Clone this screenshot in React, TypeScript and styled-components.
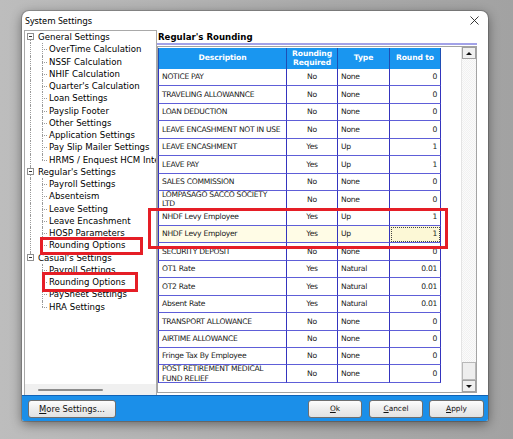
import styled, { createGlobalStyle } from "styled-components";

const GlobalStyle = createGlobalStyle`
  html, body {
    margin: 0;
    padding: 0;
  }
  body {
    font-family: "DejaVu Sans", Verdana, sans-serif;
  }
`;

const UI = `"DejaVu Sans", Verdana, sans-serif`;

const Page = styled.div`
  position: relative;
  width: 513px;
  height: 439px;
  box-sizing: border-box;
  padding: 11px 0 0 22px;
  background: linear-gradient(90deg, #bdbdbd 0%, #ababab 60%, #a2a2a2 100%);
  overflow: hidden;
`;

const Window = styled.div`
  width: 466px;
  height: 410px;
  display: flex;
  flex-direction: column;
  background: #ffffff;
  border-radius: 7px 7px 2px 2px;
  overflow: hidden;
  box-shadow: 0 0 0 1px rgba(0, 0, 0, 0.18), 0 3px 12px rgba(0, 0, 0, 0.45);
`;

const TitleBar = styled.div`
  height: 19px;
  flex: none;
  display: flex;
  align-items: center;
  justify-content: space-between;
  padding: 0 9px 0 3px;
  font-family: "Noto Sans", "Open Sans", sans-serif;
  font-size: 9px;
  color: #000;
`;

const Body = styled.div`
  flex: 1;
  min-height: 0;
  display: flex;
  padding-left: 2px;
`;

const TreePanel = styled.div`
  width: 133px;
  flex: none;
  box-sizing: border-box;
  border: 1px solid #a9a9a9;
  border-bottom: none;
  display: flex;
  flex-direction: column;
  background: #fff;
`;

const TreeScroll = styled.div`
  flex: 1;
  overflow: hidden;
`;

const TreeRow = styled.div<{ $root?: boolean; $first?: boolean; $last?: boolean; $lastChild?: boolean }>`
  position: relative;
  height: 12.25px;
  line-height: 12.25px;
  white-space: nowrap;
  font-family: ${UI};
  font-size: 8.6px;
  color: #000;
  padding-left: ${(p) => (p.$root ? 13 : 24)}px;

  &::before {
    content: "";
    position: absolute;
    left: ${(p) => (p.$root ? 5 : 17)}px;
    top: ${(p) => (p.$root && p.$first ? "50%" : "0")};
    height: ${(p) =>
      p.$root
        ? p.$first || p.$last
          ? "50%"
          : "100%"
        : p.$lastChild
        ? "50%"
        : "100%"};
    border-left: 1px dotted #9a9a9a;
  }

  &::after {
    content: "";
    position: absolute;
    display: ${(p) => (p.$root ? "none" : "block")};
    left: 17px;
    top: 50%;
    width: 5px;
    border-top: 1px dotted #9a9a9a;
  }
`;

const Trunk = styled.span`
  position: absolute;
  left: 5px;
  top: 0;
  height: 100%;
  border-left: 1px dotted #9a9a9a;
`;

const Expander = styled.span`
  position: absolute;
  left: 2px;
  top: 50%;
  margin-top: -4px;
  width: 7px;
  height: 7px;
  box-sizing: border-box;
  border: 1px solid #8f8f8f;
  background: #fff;
  z-index: 1;

  &::after {
    content: "";
    position: absolute;
    left: 1px;
    top: 2px;
    width: 3px;
    height: 1px;
    background: #333;
  }
`;

const HScroll = styled.div`
  height: 11px;
  flex: none;
  background: #f0f0f0;
  display: flex;
  align-items: center;
  padding-left: 13px;
`;

const HThumb = styled.div`
  width: 65px;
  height: 2px;
  border-radius: 1px;
  background: #8c8c8c;
`;

const RightPanel = styled.div`
  flex: 1;
  min-width: 0;
  display: flex;
  flex-direction: column;
  padding: 0 11px 2px 0;
`;

const PanelTitle = styled.div`
  height: 13px;
  flex: none;
  display: flex;
  align-items: center;
  padding-left: 1px;
  font-family: ${UI};
  font-weight: bold;
  font-size: 8.6px;
  color: #000;
  border-bottom: 2px solid #a2a2e8;
  margin-bottom: 1px;
`;

const GridFrame = styled.div`
  flex: 1;
  min-height: 0;
  display: flex;
  border: 1px solid #a3a3a3;
  background: #fff;
  overflow: hidden;
`;

const TableArea = styled.div`
  flex: 1;
  overflow: hidden;
  padding-top: 1px;
`;

const Table = styled.div`
  display: grid;
  grid-template-columns: 129px 51px 52px 51px;
  grid-template-rows: 21px;
  grid-auto-rows: 17.45px;
  width: max-content;
`;

const HeadCell = styled.div<{ $first?: boolean }>`
  background: #1996f0;
  color: #fff;
  font-family: ${UI};
  font-weight: bold;
  font-size: 7.6px;
  line-height: 8.5px;
  letter-spacing: -0.1px;
  display: flex;
  align-items: center;
  justify-content: center;
  text-align: center;
  box-sizing: border-box;
  border-right: 1px solid #1e4fb4;
  border-left: ${(p) => (p.$first ? "1px solid #1e4fb4" : "none")};
`;

const Cell = styled.div<{ $align: "left" | "center" | "right"; $first?: boolean; $selected?: boolean; $focus?: boolean }>`
  display: flex;
  align-items: center;
  justify-content: ${(p) =>
    p.$align === "left" ? "flex-start" : p.$align === "center" ? "center" : "flex-end"};
  padding: ${(p) => (p.$first ? "0 5px 0 3px" : "0 3px")};
  box-sizing: border-box;
  overflow: hidden;
  font-family: ${UI};
  font-size: 7.6px;
  line-height: 9.5px;
  letter-spacing: -0.28px;
  color: #1a1a1a;
  background: ${(p) => (p.$focus ? "#fcf8d6" : p.$selected ? "#fffce6" : "#fff")};
  border-right: 1px solid #3434be;
  border-bottom: 1px solid #5e5ed8;
  border-left: ${(p) => (p.$first ? "1px solid #3434be" : "none")};
  outline: ${(p) => (p.$focus ? "1px dotted #444" : "none")};
  outline-offset: -2px;
`;

const VScroll = styled.div`
  width: 14px;
  flex: none;
  display: flex;
  flex-direction: column;
  background: repeating-conic-gradient(#f1f1f1 0% 25%, #fbfbfb 0% 50%) 0 0 / 2px 2px;
  border-left: 1px solid #e4e4e4;
`;

const ScrollBtn = styled.div`
  height: 12px;
  flex: none;
  box-sizing: border-box;
  border: 1px solid #a0a0a0;
  background: #f0f0f0;
  display: flex;
  align-items: center;
  justify-content: center;
`;

const Arrow = styled.span<{ $dir: "up" | "down" }>`
  width: 0;
  height: 0;
  border-left: 3px solid transparent;
  border-right: 3px solid transparent;
  ${(p) => (p.$dir === "up" ? "border-bottom: 3px solid #111;" : "border-top: 3px solid #111;")}
`;

const VThumb = styled.div`
  margin-top: auto;
  height: 18px;
  flex: none;
  box-sizing: border-box;
  border: 1px solid #b8b8b8;
  background: #eeeeee;
`;

const Footer = styled.div`
  height: 26px;
  flex: none;
  box-sizing: border-box;
  background: #1b8fe9;
  border-top: 1px solid #0f62b6;
  display: flex;
  align-items: center;
  padding: 0 4px 0 6px;
`;

const Button = styled.button<{ $w: number; $size?: number; $gap?: number }>`
  width: ${(p) => p.$w}px;
  height: 18px;
  margin-left: ${(p) => p.$gap ?? 0}px;
  padding: 0;
  box-sizing: border-box;
  border: 1px solid #6f6f6f;
  border-radius: 3px;
  background: linear-gradient(#fdfdfd, #ececec 55%, #e2e2e2);
  font-family: ${UI};
  font-size: ${(p) => p.$size ?? 7.4}px;
  color: #111;
  cursor: pointer;

  &:first-child {
    margin-right: auto;
  }
`;

const Mark = styled.div<{ $x: number; $y: number; $w: number; $h: number }>`
  position: absolute;
  left: ${(p) => p.$x}px;
  top: ${(p) => p.$y}px;
  width: ${(p) => p.$w}px;
  height: ${(p) => p.$h}px;
  box-sizing: border-box;
  border: 3px solid #e51e26;
  pointer-events: none;
`;

const tree = [
  {
    label: "General Settings",
    children: [
      "OverTime Calculation",
      "NSSF Calculation",
      "NHIF Calculation",
      "Quarter's Calculation",
      "Loan Settings",
      "Payslip Footer",
      "Other Settings",
      "Application Settings",
      "Pay Slip Mailer Settings",
      "HRMS / Enquest HCM Integration",
    ],
  },
  {
    label: "Regular's Settings",
    children: [
      "Payroll Settings",
      "Absenteism",
      "Leave Setting",
      "Leave Encashment",
      "HOSP Parameters",
      "Rounding Options",
    ],
  },
  {
    label: "Casual's Settings",
    children: ["Payroll Settings", "Rounding Options", "PaySheet Settings", "HRA Settings"],
  },
];

const rows: [string, string, string, string][] = [
  ["NOTICE PAY", "No", "None", "0"],
  ["TRAVELING ALLOWANNCE", "No", "None", "0"],
  ["LOAN DEDUCTION", "No", "None", "0"],
  ["LEAVE ENCASHMENT NOT IN USE", "No", "None", "0"],
  ["LEAVE ENCASHMENT", "Yes", "Up", "1"],
  ["LEAVE PAY", "Yes", "Up", "1"],
  ["SALES COMMISSION", "No", "None", "0"],
  ["LOMPASAGO SACCO SOCIETY LTD", "No", "None", "0"],
  ["NHDF Levy Employee", "Yes", "Up", "1"],
  ["NHDF Levy Employer", "Yes", "Up", "1"],
  ["SECURITY DEPOSIT", "No", "None", "0"],
  ["OT1 Rate", "Yes", "Natural", "0.01"],
  ["OT2 Rate", "Yes", "Natural", "0.01"],
  ["Absent Rate", "Yes", "Natural", "0.01"],
  ["TRANSPORT ALLOWANCE", "No", "None", "0"],
  ["AIRTIME ALLOWANCE", "No", "None", "0"],
  ["Fringe Tax By Employee", "No", "None", "0"],
  ["POST RETIREMENT MEDICAL FUND RELIEF", "No", "None", "0"],
];

const SELECTED = 9;

export default function App() {
  return (
    <Page>
      <GlobalStyle />
      <Window>
        <TitleBar>
          <span>System Settings</span>
          <svg width="9" height="9" viewBox="0 0 9 9">
            <path d="M0.5 0.5 L8.5 8.5 M8.5 0.5 L0.5 8.5" stroke="#222" strokeWidth="0.9" />
          </svg>
        </TitleBar>

        <Body>
          <TreePanel>
            <TreeScroll>
              {tree.map((node, ni) => {
                const lastRoot = ni === tree.length - 1;
                return (
                  <div key={node.label}>
                    <TreeRow $root $first={ni === 0} $last={lastRoot}>
                      <Expander />
                      {node.label}
                    </TreeRow>
                    {node.children.map((c, ci) => (
                      <TreeRow key={c + ci} $lastChild={ci === node.children.length - 1}>
                        {!lastRoot && <Trunk />}
                        {c}
                      </TreeRow>
                    ))}
                  </div>
                );
              })}
            </TreeScroll>
            <HScroll>
              <HThumb />
            </HScroll>
          </TreePanel>

          <RightPanel>
            <PanelTitle>Regular's Rounding</PanelTitle>
            <GridFrame>
              <TableArea>
                <Table>
                  <HeadCell $first>Description</HeadCell>
                  <HeadCell>
                    Rounding
                    <br />
                    Required
                  </HeadCell>
                  <HeadCell>Type</HeadCell>
                  <HeadCell>Round to</HeadCell>
                  {rows.map(([desc, req, type, to], i) => {
                    const sel = i === SELECTED;
                    return [
                      <Cell key={i + "d"} $align="left" $first $selected={sel}>
                        {desc}
                      </Cell>,
                      <Cell key={i + "r"} $align="center" $selected={sel}>
                        {req}
                      </Cell>,
                      <Cell key={i + "t"} $align="left" $selected={sel}>
                        {type}
                      </Cell>,
                      <Cell key={i + "o"} $align="right" $selected={sel} $focus={sel}>
                        {to}
                      </Cell>,
                    ];
                  })}
                </Table>
              </TableArea>
              <VScroll>
                <ScrollBtn>
                  <Arrow $dir="up" />
                </ScrollBtn>
                <VThumb />
                <ScrollBtn>
                  <Arrow $dir="down" />
                </ScrollBtn>
              </VScroll>
            </GridFrame>
          </RightPanel>
        </Body>

        <Footer>
          <Button $w={88} $size={8.4}>
            <u>M</u>ore Settings...
          </Button>
          <Button $w={54}>
            <u>O</u>k
          </Button>
          <Button $w={54} $gap={7}>
            <u>C</u>ancel
          </Button>
          <Button $w={55} $gap={6}>
            <u>A</u>pply
          </Button>
        </Footer>
      </Window>

      <Mark $x={40} $y={237} $w={103} $h={18} />
      <Mark $x={42} $y={272} $w={96} $h={20} />
      <Mark $x={148} $y={208} $w={300} $h={41} />
    </Page>
  );
}
